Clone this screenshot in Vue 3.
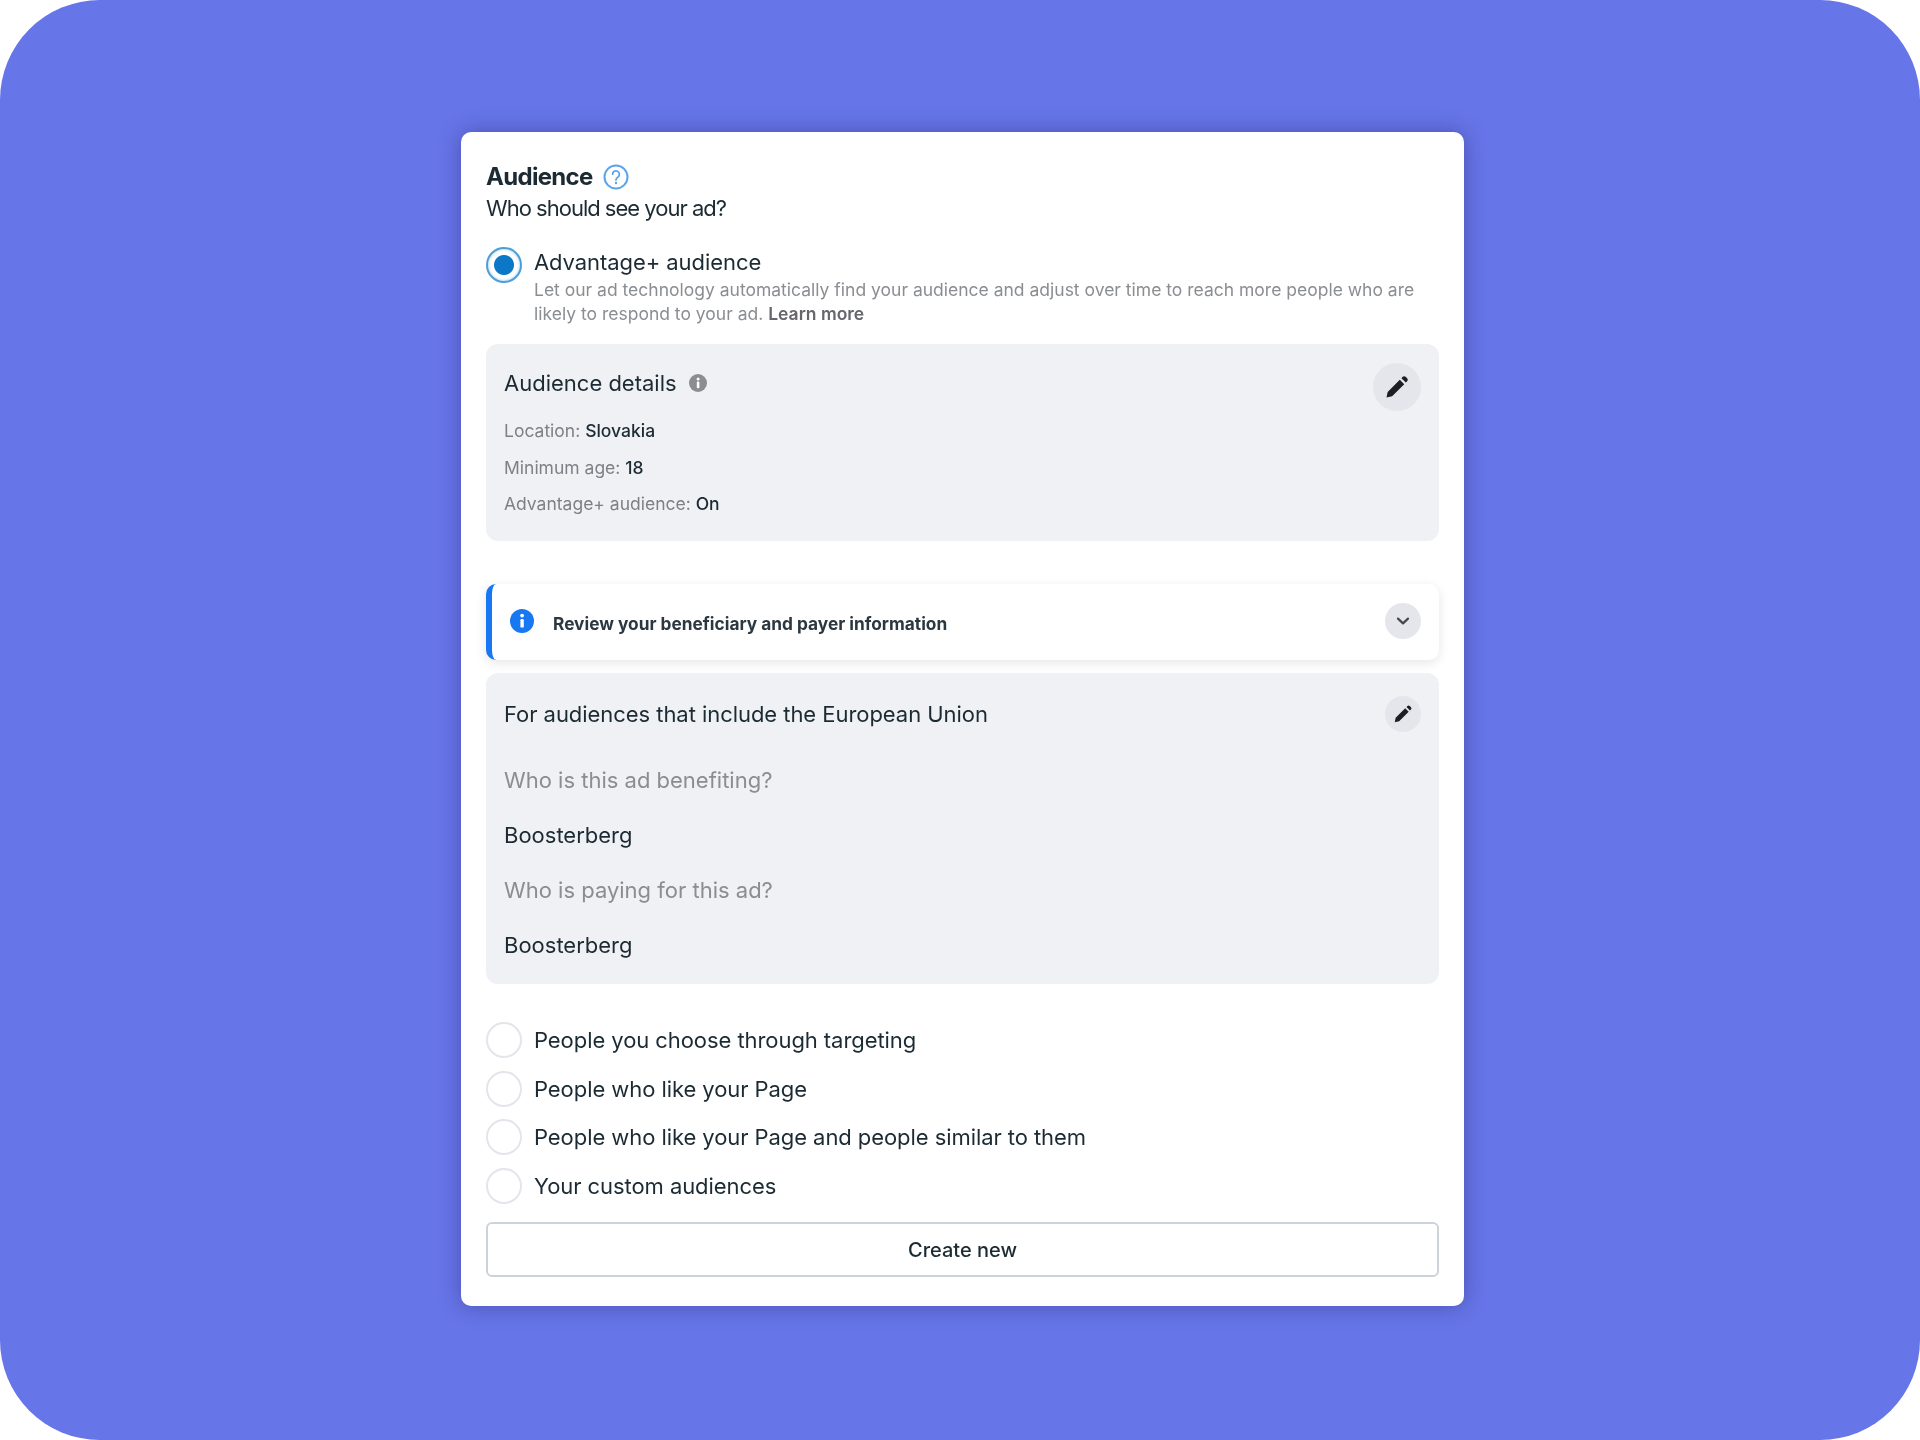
<template>
  <div class="page">
    <section class="card">
      <header class="head">
        <div class="title-row">
          <h2>Audience</h2>
          <svg class="help" viewBox="0 0 26 26" width="26" height="26">
            <circle cx="13" cy="13" r="11.5" fill="none" stroke="#5aa5ea" stroke-width="2" />
            <path d="M9.6 10.2a3.4 3.4 0 1 1 5.4 2.8c-1.2.8-2 1.4-2 3" fill="none" stroke="#5aa5ea" stroke-width="1.8" stroke-linecap="round" />
            <circle cx="13" cy="19" r="1.2" fill="#5aa5ea" />
          </svg>
        </div>
        <p class="sub">Who should see your ad?</p>
      </header>

      <div class="adv">
        <span class="radio on"></span>
        <div class="adv-text">
          <div class="opt-label adv-label">Advantage+ audience</div>
          <p class="desc">
            Let our ad technology automatically find your audience and adjust over time to reach more people who are
            likely to respond to your ad. <b>Learn more</b>
          </p>
        </div>
      </div>

      <div class="box details">
        <div class="box-head">
          <div class="box-title">
            Audience details
            <svg class="info-grey" viewBox="0 0 18 18" width="18" height="18">
              <circle cx="9" cy="9" r="9" fill="#8a8d91" />
              <rect x="7.8" y="7.6" width="2.6" height="6.6" rx="1" fill="#fff" />
              <circle cx="9.1" cy="5" r="1.5" fill="#fff" />
            </svg>
          </div>
          <button class="round big">
            <svg viewBox="0 0 24 24" width="28" height="28"><path :d="pencil" fill="#1c1e21" /></svg>
          </button>
        </div>
        <div v-for="row in detailRows" :key="row.label" class="detail-row">
          <span>{{ row.label }}:</span> <strong>{{ row.value }}</strong>
        </div>
      </div>

      <div class="banner">
        <svg class="info-blue" viewBox="0 0 24 24" width="24" height="24">
          <circle cx="12" cy="12" r="12" fill="#1877f2" />
          <rect x="10.4" y="10" width="3.4" height="8.6" rx="1.2" fill="#fff" />
          <circle cx="12.1" cy="6.6" r="1.9" fill="#fff" />
        </svg>
        <span class="banner-text">Review your beneficiary and payer information</span>
        <button class="round small">
          <svg viewBox="0 0 16 16" width="16" height="16">
            <path d="M3 5.6 8 10.4 13 5.6" fill="none" stroke="#444950" stroke-width="2.2" stroke-linecap="round" stroke-linejoin="round" />
          </svg>
        </button>
      </div>

      <div class="box eu">
        <div class="eu-head">
          <div class="eu-title">For audiences that include the European Union</div>
          <button class="round small">
            <svg viewBox="0 0 24 24" width="22" height="22"><path :d="pencil" fill="#1c1e21" /></svg>
          </button>
        </div>
        <div v-for="(row, i) in euRows" :key="i" :class="['eu-row', { muted: i % 2 === 0 }]">{{ row }}</div>
      </div>

      <ul class="options">
        <li v-for="opt in options" :key="opt" class="option">
          <span class="radio"></span>
          <span class="opt-label">{{ opt }}</span>
        </li>
      </ul>

      <button class="create">Create new</button>
    </section>
  </div>
</template>

<script setup>
// same pencil for both edit buttons
const pencil =
  "M3 21l1-4.8L14.4 5.8l3.8 3.8L7.8 20 3 21zM15.8 4.4l1.1-1.1a1.8 1.8 0 0 1 2.5 0l1.3 1.3a1.8 1.8 0 0 1 0 2.5l-1.1 1.1-3.8-3.8z";

const detailRows = [
  { label: "Location", value: "Slovakia" },
  { label: "Minimum age", value: "18" },
  { label: "Advantage+ audience", value: "On" },
];

const euRows = ["Who is this ad benefiting?", "Boosterberg", "Who is paying for this ad?", "Boosterberg"];

const options = [
  "People you choose through targeting",
  "People who like your Page",
  "People who like your Page and people similar to them",
  "Your custom audiences",
];
</script>

<style>
html,
body {
  background: #fff;
}
</style>

<style scoped>
.page {
  width: 1920px;
  height: 1440px;
  box-sizing: border-box;
  padding-top: 132px;
  background: #6675e8;
  border-radius: 100px;
  display: flex;
  justify-content: center;
  font-family: Inter, "Noto Sans", sans-serif;
  color: #1c2b33;
}

.card {
  width: 1003px;
  height: 1174px;
  box-sizing: border-box;
  margin-left: 5px;
  padding: 29px 25px 0;
  background: #fff;
  border-radius: 10px;
  box-shadow: 0 0 22px rgba(40, 40, 110, 0.45);
  filter: blur(0.5px);
}

.head h2 {
  margin: 0;
  font-size: 24px;
  font-weight: 700;
  line-height: 32px;
  letter-spacing: -0.7px;
}

.title-row {
  display: flex;
  align-items: center;
  gap: 10px;
}

.sub {
  margin: 0;
  font-size: 22px;
  line-height: 30px;
  letter-spacing: -1px;
}

.adv {
  display: flex;
  gap: 12px;
  margin-top: 23.5px;
}

.radio {
  flex: none;
  width: 36px;
  height: 36px;
  box-sizing: border-box;
  border: 2px solid #e2e5ea;
  border-radius: 50%;
  background: #fff;
}

.radio.on {
  border-color: #4c9ed9;
  background: radial-gradient(circle, #0a78c6 0 9.5px, #fff 10.5px);
  box-shadow: inset 0 0 3px rgba(76, 158, 217, 0.6);
}

.opt-label {
  font-size: 22px;
  line-height: 30px;
  letter-spacing: -0.07px;
}

.adv-label {
  margin-bottom: 1px;
}

.desc {
  margin: 0;
  font-size: 17.5px;
  line-height: 24.5px;
  color: #8a8d91;
}

.desc b {
  font-weight: 600;
  color: #65676b;
}

.box {
  background: #f0f1f5;
  border-radius: 12px;
}

.details {
  height: 197px;
  box-sizing: border-box;
  margin-top: 17.5px;
  padding: 19px 18px 0;
}

.box-head {
  display: flex;
  justify-content: space-between;
  height: 50px;
}

.box-title {
  display: flex;
  align-items: center;
  gap: 12px;
  height: 40px;
  font-size: 22px;
}

.round {
  flex: none;
  display: flex;
  align-items: center;
  justify-content: center;
  padding: 0;
  border: 0;
  border-radius: 50%;
  background: #e5e6eb;
}

.round.big {
  width: 48px;
  height: 48px;
}

.round.small {
  width: 36px;
  height: 36px;
}

.detail-row {
  height: 36.5px;
  line-height: 36.5px;
  font-size: 17.5px;
}

.detail-row span {
  color: #7c8187;
}

.detail-row strong {
  font-weight: 500;
}

.banner {
  display: flex;
  align-items: center;
  height: 76px;
  box-sizing: border-box;
  margin-top: 43px;
  padding: 0 18px 2px 18px;
  border-left: 6px solid #1877f2;
  border-radius: 10px;
  background: #fff;
  box-shadow: 0 3px 12px rgba(0, 0, 0, 0.1);
}

.banner-text {
  flex: 1;
  margin-left: 19px;
  padding-top: 4px;
  font-size: 17.3px;
  font-weight: 700;
  color: #2c3840;
}

.eu {
  height: 311px;
  box-sizing: border-box;
  margin-top: 13px;
  padding: 23px 18px 0;
}

.eu-head {
  display: flex;
  align-items: center;
  justify-content: space-between;
  height: 36px;
  margin-bottom: 21px;
}

.eu-title {
  font-size: 22px;
  letter-spacing: -0.05px;
}

.eu-row {
  height: 55px;
  line-height: 55px;
  font-size: 22px;
}

.muted {
  color: #8a8d91;
}

.options {
  list-style: none;
  margin: 32px 0 0;
  padding: 0;
}

.option {
  display: flex;
  align-items: center;
  gap: 12px;
  height: 48.6px;
}

.create {
  display: block;
  width: 100%;
  height: 55px;
  margin-top: 12px;
  border: 2px solid #cdd3da;
  border-radius: 6px;
  background: #fff;
  font: 500 20px Inter, "Noto Sans", sans-serif;
  color: #1c2b33;
}
</style>
